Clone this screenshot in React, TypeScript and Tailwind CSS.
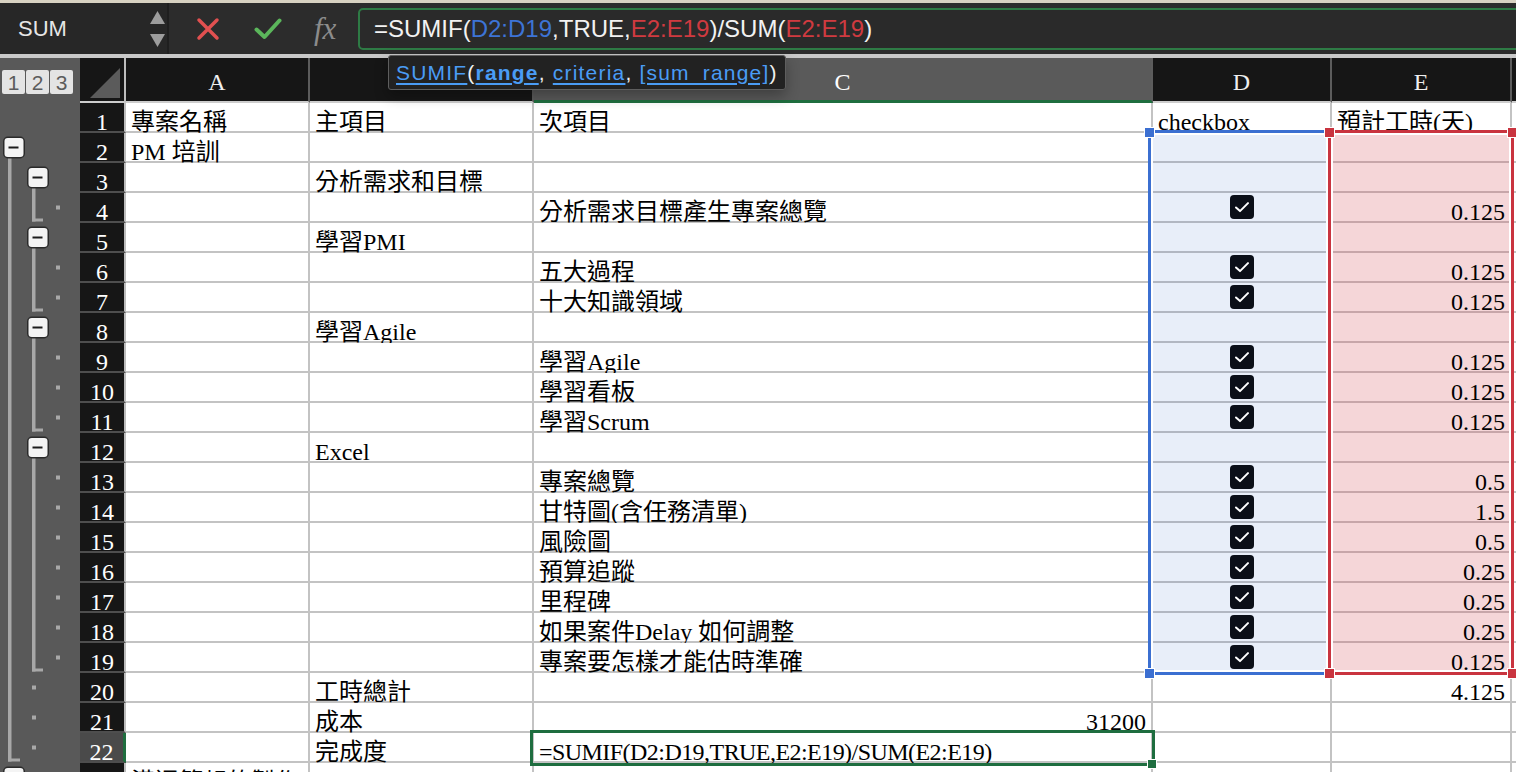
import React from 'react';

type Tone = 'plain' | 'blue' | 'pink';
type Align = 'left' | 'right' | 'center';

interface SheetRow {
  n: number;
  a?: string;
  b?: string;
  c?: string;
  cRight?: boolean;
  d?: string;
  check?: boolean;
  e?: string;
  eLeft?: boolean;
}

const rows: SheetRow[] = [
  { n: 1, a: '專案名稱', b: '主項目', c: '次項目', d: 'checkbox', e: '預計工時(天)', eLeft: true },
  { n: 2, a: 'PM 培訓' },
  { n: 3, b: '分析需求和目標' },
  { n: 4, c: '分析需求目標產生專案總覽', check: true, e: '0.125' },
  { n: 5, b: '學習PMI' },
  { n: 6, c: '五大過程', check: true, e: '0.125' },
  { n: 7, c: '十大知識領域', check: true, e: '0.125' },
  { n: 8, b: '學習Agile' },
  { n: 9, c: '學習Agile', check: true, e: '0.125' },
  { n: 10, c: '學習看板', check: true, e: '0.125' },
  { n: 11, c: '學習Scrum', check: true, e: '0.125' },
  { n: 12, b: 'Excel' },
  { n: 13, c: '專案總覽', check: true, e: '0.5' },
  { n: 14, c: '甘特圖(含任務清單)', check: true, e: '1.5' },
  { n: 15, c: '風險圖', check: true, e: '0.5' },
  { n: 16, c: '預算追蹤', check: true, e: '0.25' },
  { n: 17, c: '里程碑', check: true, e: '0.25' },
  { n: 18, c: '如果案件Delay 如何調整', check: true, e: '0.25' },
  { n: 19, c: '專案要怎樣才能估時準確', check: true, e: '0.125' },
  { n: 20, b: '工時總計', e: '4.125' },
  { n: 21, b: '成本', c: '31200', cRight: true },
  { n: 22, b: '完成度', c: '=SUMIF(D2:D19,TRUE,E2:E19)/SUM(E2:E19)' },
  { n: 23, a: '溝通簡報的製作' },
];

const toneClass: Record<Tone, string> = {
  plain: 'bg-white border-[#c3c3c3]',
  blue: 'bg-[#e8eef9] border-r-[#c3c3c3] border-b-[#b2b7c2]',
  pink: 'bg-[#f5d6d8] border-r-[#c3c3c3] border-b-[#c7a6a9]',
};

const alignClass: Record<Align, string> = {
  left: 'items-end justify-start',
  right: 'items-end justify-end',
  center: 'items-center justify-center',
};

function Cell({
  width,
  tone = 'plain',
  align = 'left',
  children,
}: {
  width: string;
  tone?: Tone;
  align?: Align;
  children?: React.ReactNode;
}) {
  return (
    <div
      className={`flex h-full shrink-0 whitespace-nowrap border-r-2 border-b-2 px-[5px] text-[24px] leading-[18px] text-black ${width} ${toneClass[tone]} ${alignClass[align]}`}
    >
      {children}
    </div>
  );
}

const Checkbox = () => (
  <svg width="24" height="24" viewBox="0 0 24 24">
    <rect width="24" height="24" rx="4" fill="#0b0f18" />
    <path d="M6 12.5l4 3.6 8-8" fill="none" stroke="#fff" strokeWidth="2" strokeLinecap="round" strokeLinejoin="round" />
  </svg>
);

function SheetRowView({ row }: { row: SheetRow }) {
  const inRange = row.n >= 2 && row.n <= 19;
  const selected = row.n === 22;
  return (
    <div className="flex h-[30px]">
      {selected ? (
        <div className="flex w-[46px] shrink-0 items-end justify-center border-b-2 border-r-[3px] border-b-[#4e4e4e] border-r-[#1f6e3f] bg-[#4a4a4a] text-[24px] leading-[18px] text-white">
          {row.n}
        </div>
      ) : (
        <div className="flex w-[46px] shrink-0 items-end justify-center border-b-2 border-r-2 border-b-[#4e4e4e] border-r-[#bdbdbd] bg-[#161616] text-[24px] leading-[18px] text-white">
          {row.n}
        </div>
      )}
      <Cell width="w-[184px]">{row.a}</Cell>
      <Cell width="w-[224px]">{row.b}</Cell>
      <Cell width="w-[619px]" align={row.cRight ? 'right' : 'left'}>
        {selected ? <span className="tracking-[-0.55px]">{row.c}</span> : row.c}
      </Cell>
      <Cell width="w-[179px]" tone={inRange ? 'blue' : 'plain'} align={row.check ? 'center' : 'left'}>
        {row.check ? <Checkbox /> : row.d}
      </Cell>
      <Cell width="w-[180px]" tone={inRange ? 'pink' : 'plain'} align={row.eLeft ? 'left' : 'right'}>
        {row.e}
      </Cell>
      <Cell width="w-[120px]" />
    </div>
  );
}

const cy = (n: number) => (n - 1) * 30 + 14.5;
const foot = (n: number) => n * 30 - 3;
const LINE = '#a8a8a8';

function MinusButton({ x, y }: { x: number; y: number }) {
  return (
    <g>
      <rect x={x + 0.75} y={y - 10.25} width={20.5} height={20.5} rx={4} fill="#f4f4f4" stroke="#2a2a2a" strokeWidth={1.5} />
      <line x1={x + 5.5} x2={x + 15.5} y1={y} y2={y} stroke="#1c1c1c" strokeWidth={2} />
    </g>
  );
}

function OutlinePane() {
  const groups: [number, number][] = [
    [3, 4],
    [5, 7],
    [8, 11],
    [12, 19],
  ];
  const detail = [4, 6, 7, 9, 10, 11, 13, 14, 15, 16, 17, 18, 19];
  return (
    <svg width="80" height="690" className="shrink-0 bg-[#595959]">
      <rect x={8} y={cy(2) + 10} width={3.5} height={foot(22) - cy(2) - 8.5} fill={LINE} />
      <rect x={8} y={foot(22) - 1.5} width={12} height={3} fill={LINE} />
      {groups.map(([s, e]) => (
        <g key={s}>
          <rect x={32} y={cy(s) + 10} width={3.5} height={foot(e) - cy(s) - 8.5} fill={LINE} />
          <rect x={32} y={foot(e) - 1.5} width={11} height={3} fill={LINE} />
          <MinusButton x={27} y={cy(s)} />
        </g>
      ))}
      {detail.map((n) => (
        <rect key={n} x={56} y={cy(n) - 2} width={4} height={4} fill={LINE} />
      ))}
      {[20, 21, 22].map((n) => (
        <rect key={n} x={32} y={cy(n) - 2} width={4} height={4} fill={LINE} />
      ))}
      <MinusButton x={3} y={cy(2)} />
      <MinusButton x={3} y={cy(23)} />
    </svg>
  );
}

const Handle = ({ className }: { className: string }) => (
  <div className={`absolute h-[11px] w-[11px] border-[1.5px] border-white ${className}`} />
);

export default function App() {
  return (
    <div className="relative h-[772px] w-[1516px] overflow-hidden bg-[#161616] font-['Liberation_Serif','Noto_Sans_CJK_TC',serif]">
      {/* formula bar */}
      <div className="h-[3px] bg-[#d8d2c2]" />
      <div className="flex h-[51px] bg-[#2c2c2c] font-['Liberation_Sans','Noto_Sans_CJK_TC',sans-serif]">
        <div className="flex w-[167px] shrink-0 items-center bg-[#272727] pl-[18px] pr-[2px]">
          <span className="text-[22px] text-[#e6e6e6]">SUM</span>
          <div className="ml-auto flex flex-col gap-[10px]">
            <svg width="15" height="13" viewBox="0 0 15 13">
              <polygon points="7.5,0 15,13 0,13" fill="#9d9d9d" />
            </svg>
            <svg width="15" height="13" viewBox="0 0 15 13">
              <polygon points="0,0 15,0 7.5,13" fill="#9d9d9d" />
            </svg>
          </div>
        </div>
        <div className="w-[2px] shrink-0 bg-[#1f1f1f]" />
        <div className="flex w-[189px] shrink-0 items-center">
          <svg width="24" height="24" viewBox="0 0 24 24" className="ml-[27px]">
            <path d="M3 3L21 21M21 3L3 21" stroke="#e25050" strokeWidth="3.5" strokeLinecap="round" />
          </svg>
          <svg width="28" height="22" viewBox="0 0 28 22" className="ml-[34px]">
            <path d="M2.5 11.5L10.5 19L25.5 2.5" fill="none" stroke="#5bb65b" strokeWidth="4" strokeLinecap="round" strokeLinejoin="round" />
          </svg>
          <span className="ml-[32px] font-['Liberation_Serif',serif] text-[31px] italic leading-none text-[#8c8c8c]">fx</span>
        </div>
        <div className="-mr-[30px] mb-[4px] mt-[5px] flex flex-1 items-center rounded-[5px] border-2 border-[#2e7b45] bg-[#2a2a2a] pl-[14px] text-[24px] text-[#f2f2f2]">
          <span>=SUMIF(</span>
          <span className="text-[#3d74d6]">D2:D19</span>
          <span>,TRUE,</span>
          <span className="text-[#d03a40]">E2:E19</span>
          <span>)/SUM(</span>
          <span className="text-[#d03a40]">E2:E19</span>
          <span>)</span>
        </div>
      </div>
      <div className="h-[4px] bg-[#c9c9c9]" />

      {/* column headers */}
      <div className="flex h-[45px]">
        <div className="flex w-[80px] shrink-0 items-start gap-[1px] bg-[#595959] pl-[2px] pt-[12px] font-['Liberation_Sans',sans-serif]">
          {['1', '2', '3'].map((l) => (
            <div key={l} className="flex h-[24px] w-[23px] items-center justify-center rounded-[2px] bg-[#e4e4e4] text-[21px] leading-none text-[#5c5c5c]">
              {l}
            </div>
          ))}
        </div>
        <div className="flex w-[46px] shrink-0 items-start border-b-2 border-r-2 border-b-[#cdcdcd] border-r-[#bdbdbd] bg-[#161616] pl-[10px] pt-[10px]">
          <svg width="30" height="30" viewBox="0 0 30 30">
            <polygon points="30,0 30,30 0,30" fill="#5b5b5b" />
          </svg>
        </div>
        <div className="flex w-[184px] shrink-0 items-end justify-center border-b-2 border-r-2 border-b-[#cdcdcd] border-r-[#5c5c5c] bg-[#161616] pb-[10px] text-[24px] leading-[18px] text-[#efefef]">A</div>
        <div className="flex w-[224px] shrink-0 items-end justify-center border-b-2 border-r-2 border-b-[#cdcdcd] border-r-[#5c5c5c] bg-[#161616] pb-[10px] text-[24px] leading-[18px] text-[#efefef]">B</div>
        <div className="flex w-[619px] shrink-0 items-end justify-center border-b-[3px] border-r-2 border-b-[#1f6e3f] border-r-[#5c5c5c] bg-[#5a5a5a] pb-[9px] text-[24px] leading-[18px] text-white">C</div>
        <div className="flex w-[179px] shrink-0 items-end justify-center border-b-2 border-r-2 border-b-[#cdcdcd] border-r-[#5c5c5c] bg-[#161616] pb-[10px] text-[24px] leading-[18px] text-[#efefef]">D</div>
        <div className="flex w-[180px] shrink-0 items-end justify-center border-b-2 border-r-2 border-b-[#cdcdcd] border-r-[#5c5c5c] bg-[#161616] pb-[10px] text-[24px] leading-[18px] text-[#efefef]">E</div>
        <div className="w-[120px] shrink-0 border-b-2 border-b-[#cdcdcd] bg-[#161616]" />
      </div>

      {/* sheet body */}
      <div className="relative flex">
        <OutlinePane />
        <div className="flex flex-col">
          {rows.map((r) => (
            <SheetRowView key={r.n} row={r} />
          ))}
        </div>

        {/* range highlights */}
        <div className="absolute left-[1148px] top-[27px] h-[545px] w-[183px] border-[3px] border-[#3b6fd1] shadow-[inset_0_0_0_2px_#ffffff]" />
        <div className="absolute left-[1328px] top-[27px] h-[545px] w-[186px] border-[3px] border-[#c9343f] shadow-[inset_0_0_0_2px_#ffffff]" />
        <Handle className="left-[1144px] top-[24px] bg-[#3b6fd1]" />
        <Handle className="left-[1144px] top-[565px] bg-[#3b6fd1]" />
        <Handle className="left-[1324px] top-[24px] bg-[#c9343f]" />
        <Handle className="left-[1324px] top-[565px] bg-[#c9343f]" />
        <Handle className="left-[1507px] top-[24px] bg-[#c9343f]" />
        <Handle className="left-[1507px] top-[565px] bg-[#c9343f]" />

        {/* active cell */}
        <div className="absolute left-[530px] top-[627px] h-[36px] w-[625px] border-[3px] border-[#1e6d3f]" />
        <div className="absolute left-[1147px] top-[656px] h-[10px] w-[10px] border border-white bg-[#1e6d3f]" />
      </div>

      {/* function tooltip */}
      <div className="absolute left-[388px] top-[55px] flex h-[35px] w-[398px] items-center rounded-[3px] border border-[#5e5e5e] bg-[#222222] pl-[7px] font-['Liberation_Sans',sans-serif] text-[21px] tracking-[1.2px] text-[#f0f0f0] shadow-[0_6px_14px_rgba(0,0,0,0.3)]">
        <span className="text-[#4a9cf5] underline underline-offset-[3px]">SUMIF</span>
        <span>(</span>
        <span className="font-bold text-[#4a9cf5] underline decoration-2 underline-offset-[3px]">range</span>
        <span>,&nbsp;</span>
        <span className="text-[#4a9cf5] underline underline-offset-[3px]">criteria</span>
        <span>,&nbsp;</span>
        <span className="text-[#4a9cf5] underline underline-offset-[3px]">[sum_range]</span>
        <span>)</span>
      </div>
    </div>
  );
}
